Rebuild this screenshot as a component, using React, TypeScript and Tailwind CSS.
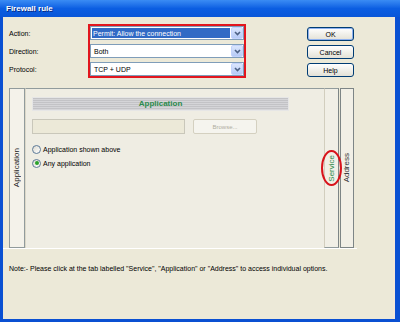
import React from "react";

function Chevron() {
  return (
    <svg width="7" height="5" viewBox="0 0 7 5">
      <polyline points="1,1 3.5,3.5 6,1" fill="none" stroke="#4d6185" strokeWidth="1.6" />
    </svg>
  );
}

function Select({ value, highlighted }: { value: string; highlighted?: boolean }) {
  return (
    <div className="flex h-[14px] items-center bg-white border border-[#7f9db9]">
      <div className="flex-1 h-full flex items-center p-[1px]">
        {highlighted ? (
          <div className="h-full w-full bg-[#316ac5] text-white flex items-center pl-[1px] text-[7px] leading-none">
            {value}
          </div>
        ) : (
          <div className="pl-[2px] text-[7px] leading-none text-black">{value}</div>
        )}
      </div>
      <div className="w-[12px] h-[12px] mr-[0px] rounded-[2px] bg-gradient-to-b from-[#dbe6fd] to-[#b6caf6] border border-[#c3d3fd] flex items-center justify-center">
        <Chevron />
      </div>
    </div>
  );
}

function Btn({ label, def }: { label: string; def?: boolean }) {
  return (
    <div
      className={
        "w-[47px] h-[14px] rounded-[3px] border border-[#003c74] bg-gradient-to-b from-[#ffffff] to-[#e3e1d6] flex items-center justify-center text-[7px] leading-none text-black " +
        (def ? "shadow-[inset_0_0_0_1px_#8fb1ef]" : "")
      }
    >
      {label}
    </div>
  );
}

function Radio({ checked, label }: { checked?: boolean; label: string }) {
  return (
    <div className="flex items-center h-[10px]">
      <div className="w-[9px] h-[9px] rounded-full border border-[#5d7a98] bg-gradient-to-br from-[#dcdad0] to-white flex items-center justify-center">
        {checked && <div className="w-[4px] h-[4px] rounded-full bg-[#2aa12a]" />}
      </div>
      <span className="ml-[2px] text-[7px] leading-none text-black">{label}</span>
    </div>
  );
}

export default function App() {
  return (
    <div className="w-[400px] h-[322px] bg-[#0a50d2] flex flex-col overflow-hidden [font-family:'Liberation_Sans',Arial,sans-serif]">
      <div className="h-[17px] shrink-0 bg-gradient-to-b from-[#3a8cf4] via-[#0b5ee2] to-[#0956d8] flex items-center pl-[6px]">
        <span className="text-white font-bold text-[8px] leading-none [text-shadow:1px_1px_0_#0a2a80]">
          Firewall rule
        </span>
      </div>
      <div className="flex-1 ml-[3px] mr-[5px] mb-[3px] bg-[#ece9d8] flex flex-col pl-[6px] border-r-2 border-[#f2e8da]">
        <div className="flex mt-[7px]">
          <div className="w-[79px] flex flex-col gap-[4px] pt-[2px]">
            <div className="h-[14px] flex items-center text-[7px] leading-none">Action:</div>
            <div className="h-[14px] flex items-center text-[7px] leading-none">Direction:</div>
            <div className="h-[14px] flex items-center text-[7px] leading-none">Protocol:</div>
          </div>
          <div className="w-[158px] border-2 border-[#e2161e] flex flex-col gap-[4px]">
            <Select value="Permit: Allow the connection" highlighted />
            <Select value="Both" />
            <Select value="TCP + UDP" />
          </div>
          <div className="ml-[61px] mt-[3px] flex flex-col gap-[4px]">
            <Btn label="OK" def />
            <Btn label="Cancel" />
            <Btn label="Help" />
          </div>
        </div>

        <div className="relative mt-[10px] w-[345px] h-[160px] flex">
          <div className="w-[16px] h-full border border-[#919b9c] bg-[#f4f2ea] flex items-center justify-center">
            <span className="[writing-mode:vertical-rl] rotate-180 text-[8px] leading-none text-[#222]">
              Application
            </span>
          </div>
          <div className="w-[299px] h-full border-t border-[#919b9c] border-l border-l-[#dcd8c8] bg-[#efede3] pl-[6px] pt-[8px] flex flex-col">
            <div className="w-[257px] h-[14px] border border-[#e6e6e6] bg-[repeating-linear-gradient(180deg,#c3c3c6_0px,#c3c3c6_1px,#d5d5d8_1px,#d5d5d8_2px)] flex items-center justify-center">
              <span className="text-[8px] font-bold leading-none text-[#2b8a4c]">Application</span>
            </div>
            <div className="flex mt-[8px] gap-[8px]">
              <div className="w-[153px] h-[15px] border border-[#c9c7ba] bg-[#ece9d8]" />
              <div className="w-[64px] h-[15px] rounded-[2px] border border-[#d4d0c0] bg-[#f5f4ee] flex items-center justify-center text-[6px] leading-none text-[#b0ad9f]">
                Browse...
              </div>
            </div>
            <div className="mt-[10px] flex flex-col gap-[4px]">
              <Radio label="Application shown above" />
              <Radio label="Any application" checked />
            </div>
          </div>
          <div className="w-[15px] h-full border-t border-b border-[#919b9c] border-l border-l-[#d2cebe] border-r border-r-[#7d8586] bg-[#f1efe6] flex items-center justify-center">
            <span className="[writing-mode:vertical-rl] rotate-180 text-[8px] leading-none text-[#2b8a4c]">
              Service
            </span>
          </div>
          <div className="ml-[1px] w-[14px] h-full border border-[#7d8586] bg-[#f1efe6] flex items-center justify-center">
            <span className="[writing-mode:vertical-rl] rotate-180 text-[8px] leading-none text-[#333]">
              Address
            </span>
          </div>
          <div className="absolute left-[312px] top-[62px] w-[21px] h-[36px] rounded-[50%] border-2 border-[#d8131b]" />
        </div>
        <div className="-ml-[6px] w-[354px] h-[1px] bg-white" />

        <div className="mt-[15px] text-[7px] leading-[9px] text-black">
          Note:- Please click at the tab labelled "Service", "Application" or "Address" to access individual options.
        </div>
      </div>
    </div>
  );
}
